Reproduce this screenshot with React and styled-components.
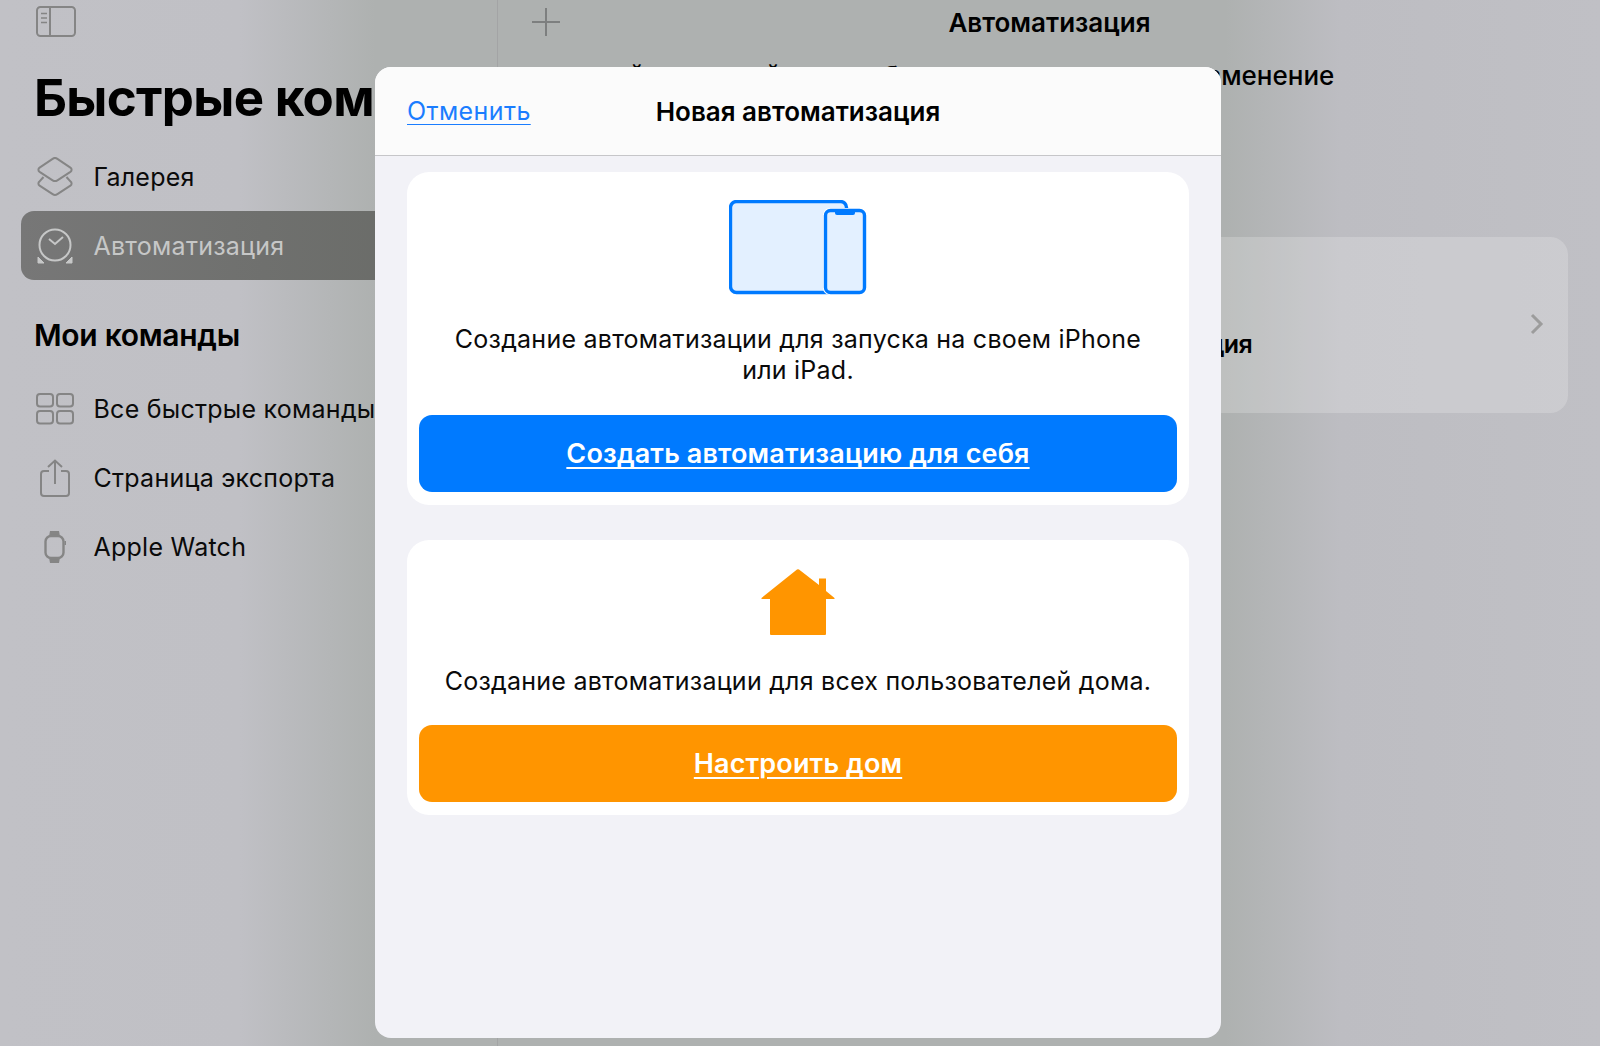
import React from 'react';
import styled, { createGlobalStyle } from 'styled-components';

const GlobalStyle = createGlobalStyle`
  html, body {
    margin: 0;
    padding: 0;
    background: #bfbfc4;
  }
  * { box-sizing: border-box; }
`;

const Screen = styled.div`
  position: relative;
  display: flex;
  width: 1600px;
  height: 1046px;
  overflow: hidden;
  font-family: Inter, "Liberation Sans", sans-serif;
  color: #000;
  background: linear-gradient(90deg, #c1c1c6 0, #c0c0c5 240px, #aeb1b0 375px, #aeb1b0 1225px, #bdbdc2 1340px, #c0c0c5 1600px);
`;

const Sidebar = styled.aside`
  flex: 0 0 498px;
  min-width: 0;
  height: 100%;
  border-right: 1px solid #a3a4a5;
`;

const TopBar = styled.div`
  display: flex;
  align-items: center;
  height: 44px;
  padding-left: 36px;
`;

const LargeTitle = styled.h1`
  height: 98px;
  margin: 0;
  padding: 24px 0 0 34px;
  font-size: 51px;
  line-height: 60px;
  font-weight: 700;
  letter-spacing: -0.7px;
  white-space: nowrap;
`;

const SectionTitle = styled.h2`
  height: 94px;
  margin: 0;
  padding: 35px 0 0 34px;
  font-size: 30px;
  line-height: 40px;
  font-weight: 600;
  letter-spacing: -0.3px;
`;

const Row = styled.div`
  display: flex;
  align-items: center;
  gap: 16.5px;
  height: 69px;
  margin: 0 21px;
  padding-left: 12px;
  border-radius: 13px;
  font-size: 25px;
  letter-spacing: 0.25px;
  white-space: nowrap;
  color: ${p => (p.$active ? '#c6c7c7' : '#0a0a0a')};
  background: ${p => (p.$active ? 'linear-gradient(90deg, #777777, #686a66)' : 'transparent')};
`;

const IconSlot = styled.span`
  display: flex;
  align-items: center;
  justify-content: center;
  flex: 0 0 44px;
  height: 44px;
`;

const Detail = styled.main`
  flex: 1;
  min-width: 0;
`;

const DetailBar = styled.div`
  display: grid;
  grid-template-columns: 1fr auto 1fr;
  align-items: center;
  height: 44px;
  padding: 0 32px 0 33px;
`;

const BarTitle = styled.div`
  font-size: 26px;
  font-weight: 600;
  letter-spacing: 0;
`;

const Intro = styled.p`
  margin: 15px 0 0;
  padding-left: 41px;
  font-size: 26px;
  line-height: 34px;
  font-weight: 500;
  white-space: nowrap;
`;

const BackCard = styled.div`
  display: flex;
  align-items: flex-end;
  justify-content: center;
  position: relative;
  height: 176px;
  margin: 144px 32px 0;
  padding-bottom: 54px;
  border-radius: 18px;
  background: rgba(255, 255, 255, 0.2);
  font-size: 25px;
  font-weight: 600;
  letter-spacing: -0.6px;
`;

const Chevron = styled.span`
  position: absolute;
  right: 24px;
  top: 76px;
  display: flex;
`;

const Modal = styled.section`
  position: absolute;
  left: 375px;
  top: 67px;
  display: flex;
  flex-direction: column;
  width: 846px;
  height: 971px;
  overflow: hidden;
  border-radius: 16px;
  background: #f2f2f7;
`;

const ModalHeader = styled.header`
  display: grid;
  grid-template-columns: 1fr auto 1fr;
  align-items: center;
  flex: 0 0 89px;
  padding: 0 32px;
  background: #fbfbfb;
  border-bottom: 1px solid #c6c6c9;
`;

const CancelLink = styled.a`
  justify-self: start;
  font-size: 25px;
  letter-spacing: 0.4px;
  color: #1a7dff;
  text-decoration: underline;
  text-decoration-thickness: 1px;
  text-underline-offset: 4px;
`;

const ModalTitle = styled.div`
  font-size: 26px;
  font-weight: 600;
  letter-spacing: 0;
`;

const ModalBody = styled.div`
  display: flex;
  flex-direction: column;
  gap: 35px;
  padding: 16px 32px 0;
`;

const Card = styled.div`
  display: flex;
  flex-direction: column;
  align-items: center;
  padding: ${p => p.$top}px 12px 13px;
  border-radius: 22px;
  background: #fff;
`;

const CardText = styled.p`
  width: 720px;
  margin: ${p => p.$gap}px 0 ${p => p.$after}px;
  text-align: center;
  font-size: 25px;
  line-height: 31px;
  letter-spacing: 0.24px;
  color: #0a0a0a;
`;

const ActionButton = styled.a`
  display: flex;
  align-items: center;
  justify-content: center;
  align-self: stretch;
  height: 77px;
  border-radius: 13px;
  background: ${p => p.$color};
  color: #fff;
  font-size: 27px;
  font-weight: 600;
  letter-spacing: 0.14px;
  text-decoration: underline;
  text-decoration-thickness: 2px;
  text-underline-offset: 4px;
`;

const GREY = '#858585';

const PanelIcon = () => (
  <svg width="40" height="32" viewBox="0 0 40 32" fill="none" stroke={GREY} strokeWidth="2">
    <rect x="1" y="1" width="38" height="29" rx="3.5" />
    <path d="M14 1v29" />
    <path d="M5 7.5h6M5 12h6M5 16.5h6" strokeWidth="1.6" />
  </svg>
);

const LayersIcon = ({ color }) => (
  <svg width="36" height="40" viewBox="0 0 36 40" fill="none" stroke={color} strokeWidth="2" strokeLinejoin="round">
    <path d="M15.6 1.8 2.6 10.6c-1.6 1.1-1.6 3.2 0 4.3l13 8.4c1.5 1 3.3 1 4.8 0l13-8.4c1.6-1.1 1.6-3.2 0-4.3l-13-8.8c-1.5-1-3.3-1-4.800 0Z" />
    <path d="M6.500 20 2.600 24.400c-1.600 1.100-1.600 3.200 0 4.300l13 8.400c1.500 1 3.300 1 4.800 0l13-8.400c1.600-1.100 1.600-3.200 0-4.300L29.500 20" />
  </svg>
);

const ClockIcon = ({ color }) => (
  <svg width="36" height="36" viewBox="0 0 36 36" fill="none" stroke={color} strokeWidth="2">
    <circle cx="18" cy="17" r="15.500" />
    <path d="M12 11l6 5 8-7" />
    <path d="M1 35v-6l6 6ZM35 35v-6l-6 6Z" fill={color} strokeWidth="1" />
  </svg>
);

const GridIcon = ({ color }) => (
  <svg width="38" height="32" viewBox="0 0 38 32" fill="none" stroke={color} strokeWidth="2">
    <rect x="1" y="1" width="16" height="12.500" rx="3" />
    <rect x="21" y="1" width="16" height="12.500" rx="3" />
    <rect x="1" y="18" width="16" height="12.500" rx="3" />
    <rect x="21" y="18" width="16" height="12.500" rx="3" />
  </svg>
);

const ShareIcon = ({ color }) => (
  <svg width="30" height="38" viewBox="0 0 30 38" fill="none" stroke={color} strokeWidth="2">
    <path d="M9 12H4a3 3 0 0 0-3 3v19a3 3 0 0 0 3 3h22a3 3 0 0 0 3-3V15a3 3 0 0 0-3-3h-5" />
    <path d="M15 25V1.500M8 8l7-6.500L22 8" />
  </svg>
);

const WatchIcon = ({ color }) => (
  <svg width="22" height="34" viewBox="0 0 22 34" fill="none">
    <path d="M5 6.500 6 1h9l1 5.500ZM5 27.500 6 33h9l1-5.500Z" fill={color} />
    <rect x="1.500" y="6" width="18" height="22" rx="5.500" stroke={color} strokeWidth="2.400" />
    <rect x="20.500" y="11" width="1.500" height="4" fill={color} />
  </svg>
);

const PlusIcon = () => (
  <svg width="30" height="30" viewBox="0 0 30 30" fill="none" stroke="#7d7f7f" strokeWidth="2">
    <path d="M15 1v28M1 15h28" />
  </svg>
);

const ChevronIcon = () => (
  <svg width="14" height="22" viewBox="0 0 14 22" fill="none" stroke="#9c9c9c" strokeWidth="3">
    <path d="M2 2l9 9-9 9" />
  </svg>
);

const DevicesIcon = () => (
  <svg width="138" height="95" viewBox="0 0 138 95">
    <rect x="1.500" y="1.500" width="116" height="91" rx="6" fill="#e3f0ff" stroke="#007aff" strokeWidth="3.400" />
    <rect x="94" y="8" width="44" height="87" rx="7" fill="#fff" />
    <rect x="96.500" y="10.500" width="39" height="82" rx="5" fill="#e3f0ff" stroke="#007aff" strokeWidth="3.400" />
    <path d="M106 10h20v3a2 2 0 0 1-2 2h-16a2 2 0 0 1-2-2Z" fill="#007aff" />
  </svg>
);

const HouseIcon = () => (
  <svg width="74" height="68" viewBox="0 0 74 68" fill="#ff9500">
    <path d="M36 1.500a2 2 0 0 1 2 0L58 17V10.500h7V23l8.500 7v1H65v35a1 1 0 0 1-1 1H10a1 1 0 0 1-1-1V31H.5v-1Z" />
  </svg>
);

export default function App() {
  return (
    <Screen>
      <GlobalStyle />
      <Sidebar>
        <TopBar><PanelIcon /></TopBar>
        <LargeTitle>Быстрые команды</LargeTitle>
        <Row>
          <IconSlot><LayersIcon color={GREY} /></IconSlot>
          Галерея
        </Row>
        <Row $active>
          <IconSlot><ClockIcon color="#c6c7c7" /></IconSlot>
          Автоматизация
        </Row>
        <SectionTitle>Мои команды</SectionTitle>
        <Row>
          <IconSlot><GridIcon color={GREY} /></IconSlot>
          Все быстрые команды
        </Row>
        <Row>
          <IconSlot><ShareIcon color={GREY} /></IconSlot>
          Страница экспорта
        </Row>
        <Row>
          <IconSlot><WatchIcon color={GREY} /></IconSlot>
          Apple Watch
        </Row>
      </Sidebar>

      <Detail>
        <DetailBar>
          <PlusIcon />
          <BarTitle>Автоматизация</BarTitle>
        </DetailBar>
        <Intro>настройте важный отклик быстрых команд тут на изменение</Intro>
        <BackCard>
          Моя новая личная автоматизация
          <Chevron><ChevronIcon /></Chevron>
        </BackCard>
      </Detail>

      <Modal>
        <ModalHeader>
          <CancelLink href="#">Отменить</CancelLink>
          <ModalTitle>Новая автоматизация</ModalTitle>
        </ModalHeader>
        <ModalBody>
          <Card $top={28}>
            <DevicesIcon />
            <CardText $gap={29} $after={29}>
              Создание автоматизации для запуска на своем iPhone или iPad.
            </CardText>
            <ActionButton href="#" $color="#007aff">Создать автоматизацию для себя</ActionButton>
          </Card>
          <Card $top={28}>
            <HouseIcon />
            <CardText $gap={30} $after={28}>
              Создание автоматизации для всех пользователей дома.
            </CardText>
            <ActionButton href="#" $color="#ff9500">Настроить дом</ActionButton>
          </Card>
        </ModalBody>
      </Modal>
    </Screen>
  );
}
